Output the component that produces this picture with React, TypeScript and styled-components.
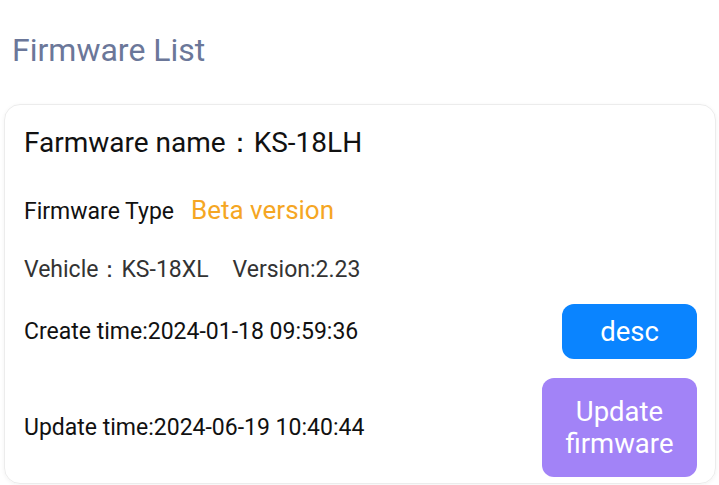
import styled, { createGlobalStyle } from 'styled-components';

const GlobalStyle = createGlobalStyle`
	body {
		margin: 0;
		background: #ffffff;
		font-family: Roboto, 'Noto Sans', sans-serif;
	}
`;

const StyledPage = styled.div`
	width: 719px;
	height: 485px;
	overflow: hidden;
	padding: 0 3px 0 4px;
	box-sizing: border-box;
`;

const StyledTitle = styled.h2`
	margin: 0;
	padding: 30px 0 0 8px;
	height: 104px;
	box-sizing: border-box;
	font-size: 32px;
	font-weight: 400;
	line-height: 40px;
	color: #6b7799;
`;

const StyledCard = styled.section`
	border: 1px solid #ececec;
	border-radius: 16px;
	box-shadow: 0 1px 4px rgba(0, 0, 0, 0.05);
	padding: 0 18px 0 19px;
	height: 380px;
	box-sizing: border-box;
	display: flex;
	flex-direction: column;
`;

const StyledRow = styled.div<{ $height: number; $top?: number }>`
	display: flex;
	align-items: center;
	justify-content: space-between;
	height: ${(p) => p.$height}px;
	padding-top: ${(p) => p.$top ?? 0}px;
	box-sizing: border-box;
	flex-shrink: 0;
`;

const StyledName = styled.div`
	font-size: 28px;
	color: #111111;
`;

const StyledLabel = styled.span<{ $color?: string }>`
	font-size: 23px;
	color: ${(p) => p.$color ?? '#111111'};
`;

const StyledType = styled.span`
	font-size: 26px;
	color: #f5a623;
	margin-left: 17px;
`;

const StyledSpacer = styled.span`
	display: inline-block;
	width: 24px;
`;

const StyledButton = styled.button<{ $bg: string; $width: number; $height: number }>`
	width: ${(p) => p.$width}px;
	height: ${(p) => p.$height}px;
	border: none;
	border-radius: 12px;
	background: ${(p) => p.$bg};
	color: #ffffff;
	font-family: Roboto, sans-serif;
	font-size: 27.5px;
	line-height: 32px;
	padding: 0;
`;

export default function App() {
	return (
		<>
			<GlobalStyle />
			<StyledPage>
				<StyledTitle>Firmware List</StyledTitle>
				<StyledCard>
					<StyledRow $height={76}>
						<StyledName>Farmware name：KS-18LH</StyledName>
					</StyledRow>
					<StyledRow $height={58}>
						<div>
							<StyledLabel>Firmware Type</StyledLabel>
							<StyledType>Beta version</StyledType>
						</div>
					</StyledRow>
					<StyledRow $height={60}>
						<div>
							<StyledLabel $color='#333333'>Vehicle：KS-18XL</StyledLabel>
							<StyledSpacer />
							<StyledLabel $color='#333333'>Version:2.23</StyledLabel>
						</div>
					</StyledRow>
					<StyledRow $height={65}>
						<StyledLabel>Create time:2024-01-18 09:59:36</StyledLabel>
						<StyledButton $bg='#0a84ff' $width={135} $height={55}>
							desc
						</StyledButton>
					</StyledRow>
					<StyledRow $height={119} $top={8}>
						<StyledLabel>Update time:2024-06-19 10:40:44</StyledLabel>
						<StyledButton $bg='#a283f7' $width={155} $height={99}>
							Update
							<br />
							firmware
						</StyledButton>
					</StyledRow>
				</StyledCard>
			</StyledPage>
		</>
	);
}
